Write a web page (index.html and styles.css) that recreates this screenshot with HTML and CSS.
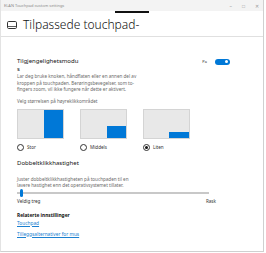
FILE: index.html
```html
<!DOCTYPE html>
<html lang="no">
<head>
    <meta charset="UTF-8">
    <meta name="viewport" content="width=device-width, initial-scale=1.0">
    <title>ELAN Touchpad custom settings</title>
    <link rel="stylesheet" href="styles.css">
</head>
<body>
    <div class="window">
        <div class="titlebar">
            <span class="app-name">ELAN Touchpad custom settings</span>
            <div class="controls">
                <span>&#8211;</span>
                <span>&#9633;</span>
                <span>&#10005;</span>
            </div>
        </div>
        <div class="redact"></div>

        <div class="page-header">
            <svg class="header-icon" width="10" height="8" viewBox="0 0 10 8">
                <rect x="0.5" y="0.5" width="9" height="7" rx="1.2" fill="none" stroke="#333" stroke-width="1"/>
                <line x1="1" y1="5.5" x2="9" y2="5.5" stroke="#333" stroke-width="0.8"/>
            </svg>
            <h1>Tilpassede touchpad-</h1>
        </div>

        <div class="content">
            <!-- Accessibility mode -->
            <section class="setting">
                <div class="setting-row">
                    <h2 class="setting-title narrow">Tilgjengelighetsmodus</h2>
                    <div class="toggle-wrap">
                        <span class="toggle-label">På</span>
                        <span class="toggle on"><span class="knob"></span></span>
                    </div>
                </div>
                <p class="desc">Lar deg bruke knoken, håndflaten eller en annen del av kroppen på touchpaden. Berøringsbevegelser, som to-fingers zoom, vil ikke fungere når dette er aktivert.</p>
                <p class="label">Velg størrelsen på høyreklikkområdet</p>

                <div class="zones">
                    <div class="zone">
                        <div class="pad"><div class="area area-large"></div></div>
                        <label class="radio"><span class="dot"></span>Stor</label>
                    </div>
                    <div class="zone">
                        <div class="pad"><div class="area area-medium"></div></div>
                        <label class="radio"><span class="dot"></span>Middels</label>
                    </div>
                    <div class="zone">
                        <div class="pad"><div class="area area-small"></div></div>
                        <label class="radio checked"><span class="dot"></span>Liten</label>
                    </div>
                </div>
            </section>

            <!-- Double click speed -->
            <section class="setting">
                <h2 class="setting-title">Dobbeltklikkhastighet</h2>
                <p class="desc">Juster dobbeltklikkhastigheten på touchpaden til en lavere hastighet enn det operativsystemet tillater.</p>
                <div class="slider">
                    <div class="track"></div>
                    <div class="thumb"></div>
                </div>
                <div class="slider-labels">
                    <span>Veldig treg</span>
                    <span>Rask</span>
                </div>
            </section>

            <section class="related">
                <h3>Relaterte innstillinger</h3>
                <a href="#" class="link">Touchpad</a>
                <a href="#" class="link">Tilleggsalternativer for mus</a>
            </section>
        </div>
    </div>
</body>
</html>
```

FILE: styles.css
```css
* {
    box-sizing: border-box;
}

body {
    margin: 0;
    background: #fff;
    font-family: "Noto Sans", "Open Sans", sans-serif;
    color: #000;
}

.window {
    width: 264px;
    height: 252px;
    border-left: 1px solid #e3e3e3;
    border-right: 1px solid #d0d0d0;
    border-bottom: 1px solid #d0d0d0;
    background: #fff;
}

.titlebar {
    height: 11px;
    background: #f3f3f3;
    display: flex;
    align-items: center;
    justify-content: space-between;
    padding: 0 4px 0 3px;
}

.app-name {
    font-size: 4px;
    color: #8a8a8a;
}

.controls {
    display: flex;
    gap: 10px;
    font-size: 5px;
    color: #999;
}

.redact {
    width: 34px;
    height: 2px;
    margin: 0 auto;
    background: #111;
}

.page-header {
    height: 24px;
    display: flex;
    align-items: center;
    padding-left: 6px;
    border-bottom: 1px solid #e0e0e0;
}

.header-icon {
    margin-right: 6px;
}

.page-header h1 {
    margin: 0;
    font-size: 12px;
    font-weight: 300;
    color: #111;
}

.content {
    padding: 20px 0 0 16px;
}

.setting-row {
    display: flex;
    justify-content: space-between;
    align-items: flex-start;
    width: 213px;
}

.setting-title {
    margin: 0;
    font-size: 6px;
    font-weight: 400;
    line-height: 8px;
    color: #111;
}

.narrow {
    width: 63px;
    overflow-wrap: anywhere;
}

.toggle-wrap {
    display: flex;
    align-items: center;
    gap: 8px;
    margin-top: 1.5px;
}

.toggle-label {
    font-size: 4px;
    color: #333;
}

.toggle {
    display: flex;
    align-items: center;
    justify-content: flex-end;
    width: 15px;
    height: 6px;
    border-radius: 3px;
    background: #0078d7;
    padding-right: 2px;
}

.knob {
    width: 3px;
    height: 3px;
    border-radius: 50%;
    background: #fff;
}

.desc {
    margin: 0;
    width: 124px;
    font-size: 4.6px;
    line-height: 6.5px;
    color: #6b6b6b;
}

.label {
    margin: 5px 0 0;
    font-size: 4.6px;
    line-height: 6px;
    color: #6b6b6b;
}

.zones {
    display: flex;
    gap: 16px;
    margin-top: 5px;
}

.zone {
    width: 47px;
}

.pad {
    height: 30px;
    display: flex;
    justify-content: flex-end;
    align-items: flex-end;
    background: #e8e8e8;
    border: 1px solid #d4d4d4;
}

.area {
    background: #0078d7;
}

.area-large {
    width: 19px;
    height: 100%;
}

.area-medium {
    width: 19px;
    height: 12px;
}

.area-small {
    width: 20px;
    height: 6px;
}

.radio {
    display: flex;
    align-items: center;
    gap: 3px;
    height: 7px;
    margin-top: 5px;
    font-size: 4.6px;
    line-height: 7px;
    color: #333;
}

.dot {
    width: 7px;
    height: 7px;
    border: 1px solid #333;
    border-radius: 50%;
    display: flex;
    align-items: center;
    justify-content: center;
}

.radio.checked .dot::after {
    content: "";
    width: 3px;
    height: 3px;
    border-radius: 50%;
    background: #111;
}

.setting + .setting {
    margin-top: 8px;
}

.setting + .setting .desc {
    margin-top: 9px;
}

.slider {
    position: relative;
    width: 192px;
    height: 8px;
}

.track {
    position: absolute;
    left: 0;
    right: 0;
    top: 3px;
    height: 2px;
    background: #c8c8c8;
}

.thumb {
    position: absolute;
    left: 3px;
    top: 0;
    width: 3px;
    height: 8px;
    border-radius: 1.5px;
    background: #0078d7;
}

.slider-labels {
    display: flex;
    justify-content: space-between;
    width: 199px;
    margin-top: 1.5px;
    font-size: 4.6px;
    line-height: 6px;
    color: #333;
}

.related {
    margin-top: 7.5px;
}

.related h3 {
    margin: 0;
    font-size: 4.8px;
    line-height: 6px;
    font-weight: 700;
    color: #111;
}

.link {
    display: block;
    width: max-content;
    margin-top: 2px;
    font-size: 4.8px;
    line-height: 6px;
    color: #1a7fd0;
    text-decoration: underline;
}

.link + .link {
    margin-top: 5px;
}
```
